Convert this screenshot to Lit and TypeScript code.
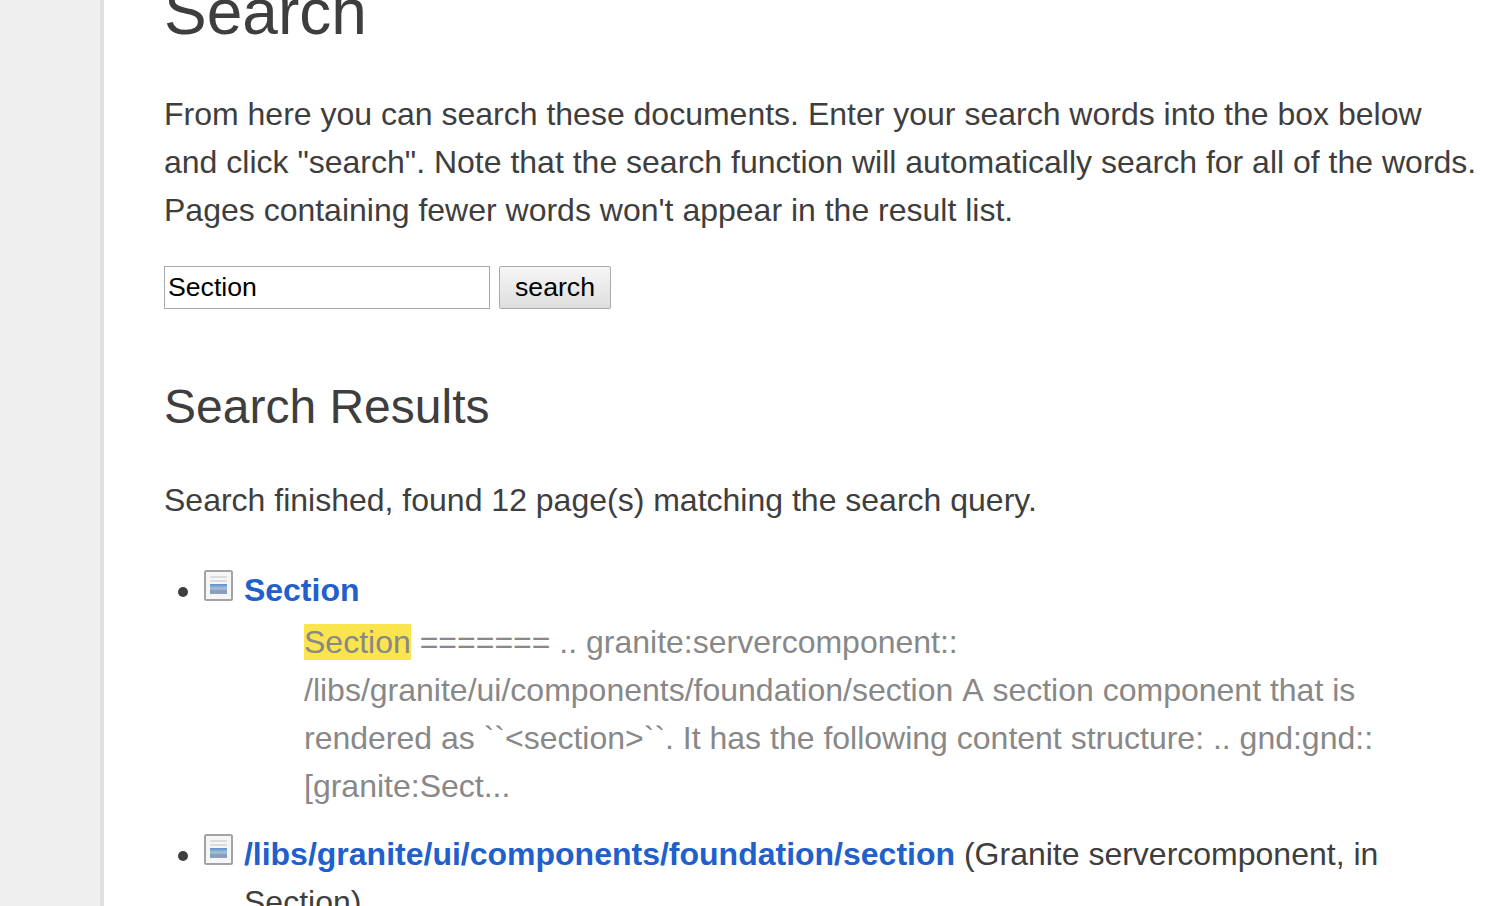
import { LitElement, html, css, svg } from 'lit';
import { customElement } from 'lit/decorators.js';

const pageIcon = svg`<svg class="icon" width="29" height="31" viewBox="0 0 29 31">
    <defs>
      <linearGradient id="pic" x1="0" y1="0" x2="0" y2="1">
        <stop offset="0" stop-color="#5a90cc"/>
        <stop offset="0.45" stop-color="#a9c0d6"/>
        <stop offset="0.7" stop-color="#7f9cbc"/>
        <stop offset="1" stop-color="#8fa4bb"/>
      </linearGradient>
    </defs>
    <rect x="1" y="1" width="27" height="29" rx="1.5" fill="#f6f6f6" stroke="#a3a3a3" stroke-width="2"/>
    <rect x="6" y="6" width="17" height="2" fill="#dcdcdc"/>
    <rect x="6" y="10" width="17" height="2" fill="#dcdcdc"/>
    <rect x="6" y="14" width="17" height="10" fill="url(#pic)"/>
  </svg>`;

@customElement('app-root')
export class AppRoot extends LitElement {
  static styles = css`
    :host {
      display: flex;
      height: 906px;
      overflow: hidden;
      background: #fff;
      color: #3e3e3e;
      font-family: 'Liberation Sans', Arial, sans-serif;
      font-size: 32px;
      line-height: 48px;
    }

    .sidebar {
      flex: none;
      width: 100px;
      background: #efefef;
      border-right: 4px solid #e0e0e0;
    }

    .body {
      flex: 1;
      min-width: 0;
      padding: 0 12px 0 60px;
    }

    h1 {
      margin: -24px 0 0;
      font-size: 64px;
      font-weight: 400;
      line-height: 72px;
    }

    p {
      margin: 0;
    }

    .intro {
      margin-top: 42px;
    }

    form {
      display: flex;
      gap: 9px;
      margin-top: 32px;
    }

    input {
      box-sizing: border-box;
      width: 326px;
      height: 43px;
      padding: 0 3px;
      border: 1px solid #aaa;
      background: #fff;
      color: #000;
      font: 26.67px 'Liberation Sans', Arial, sans-serif;
    }

    button {
      box-sizing: border-box;
      width: 112px;
      height: 43px;
      padding: 0;
      border: 1px solid #aaa;
      border-radius: 2px;
      background: linear-gradient(#f6f6f6, #dedede);
      color: #000;
      font: 26.67px 'Liberation Sans', Arial, sans-serif;
    }

    h2 {
      margin: 69px 0 0;
      font-size: 48px;
      font-weight: 400;
      line-height: 58px;
    }

    .status {
      margin-top: 40px;
    }

    ul {
      margin: 42px 0 0;
      padding: 0 0 0 40px;
    }

    li {
      margin-bottom: 20px;
    }

    .title {
      padding-left: 40px;
      text-indent: -40px;
    }

    .icon {
      vertical-align: 0;
      margin-right: 2px;
    }

    a {
      color: #2160cc;
      font-weight: 700;
      text-decoration: none;
    }

    .context {
      margin: 4px 0 0 100px;
      color: #888;
      font-kerning: none;
    }

    mark {
      background: #fbe54e;
      color: inherit;
    }
  `;

  render() {
    return html`
      <div class="sidebar"></div>
      <div class="body">
        <h1>Search</h1>
        <p class="intro">
          From here you can search these documents. Enter your search words into the box below
          and click "search". Note that the search function will automatically search for all of the words.
          Pages containing fewer words won't appear in the result list.
        </p>
        <form>
          <input type="text" value="Section" />
          <button type="button">search</button>
        </form>
        <h2>Search Results</h2>
        <p class="status">Search finished, found 12 page(s) matching the search query.</p>
        <ul>
          <li>
            <div class="title">${pageIcon} <a href="#">Section</a></div>
            <div class="context">
              <mark>Section</mark> ======= .. granite:servercomponent::
              /libs/granite/ui/components/foundation/section A section component that is
              rendered as \`\`&lt;section&gt;\`\`. It has the following content structure: .. gnd:gnd::
              [granite:Sect...
            </div>
          </li>
          <li>
            <div class="title">
              ${pageIcon} <a href="#">/libs/granite/ui/components/foundation/section</a>
              (Granite servercomponent, in Section)
            </div>
          </li>
        </ul>
      </div>
    `;
  }
}
